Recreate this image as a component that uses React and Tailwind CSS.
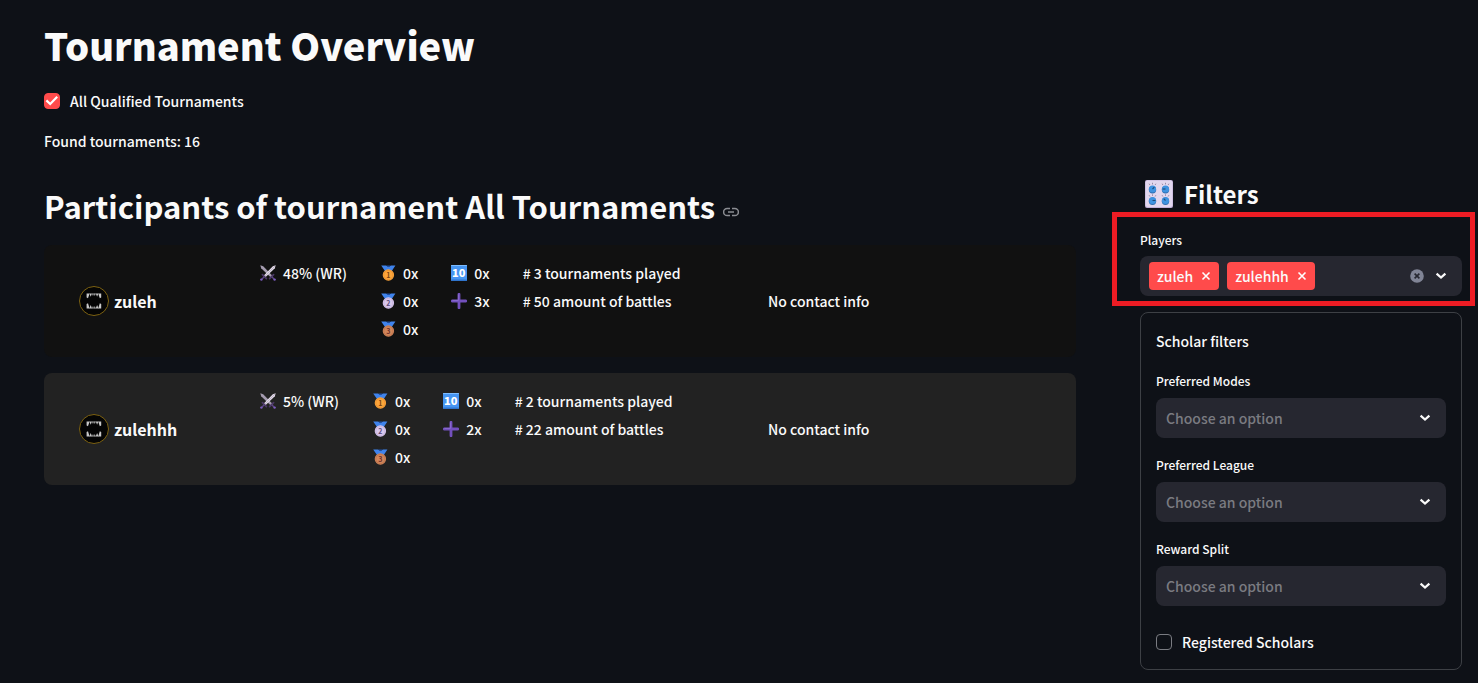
import { useState } from 'react'

const medalColors = [
  { fill: '#fca53b', ring: '#e08a2a', text: '#7a4312' },
  { fill: '#d9c8ec', ring: '#bba6d6', text: '#5d4a7a' },
  { fill: '#d1855a', ring: '#b56d45', text: '#6d2f2a' },
]

const participants = [
  { name: 'zuleh', winRate: 48, medals: [0, 0, 0], topTen: 0, other: 3, played: 3, battles: 50, card: 'bg-[#111111]' },
  { name: 'zulehhh', winRate: 5, medals: [0, 0, 0], topTen: 0, other: 2, played: 2, battles: 22, card: 'bg-[#222222]' },
]

const selects = [
  { id: 'modes', label: 'Preferred Modes' },
  { id: 'league', label: 'Preferred League' },
  { id: 'split', label: 'Reward Split' },
]

function Medal({ place }) {
  const c = medalColors[place - 1]
  return (
    <svg width="16" height="16" viewBox="0 0 16 16" className="shrink-0" aria-hidden="true">
      <path d="M1.2 0.4H6L8.5 2 11 0.4h4.4L11.8 6H5z" fill="#3f83ec" />
      <path d="M6.2 0.4h4.4L8.4 2.2z" fill="#1d4fa8" />
      <circle cx="8.4" cy="10" r="5.7" fill={c.fill} />
      <circle cx="8.4" cy="10" r="4.6" fill="none" stroke={c.ring} strokeWidth="0.6" />
      <text x="8.4" y="12.6" textAnchor="middle" fontSize="7" fontWeight="700" fill={c.text}>{place}</text>
    </svg>
  )
}

function Swords() {
  return (
    <svg width="16" height="16" viewBox="0 0 16 16" className="shrink-0" aria-hidden="true">
      <path d="M0.3 0.3l2.9.9 9.2 9.6-1.6 1.6L1.2 3.2z" fill="#a59cb0" />
      <path d="M15.7 0.3l-2.9.9-9.2 9.6 1.6 1.6L14.8 3.2z" fill="#e4dcea" />
      <path d="M15 1L4.6 11.6" stroke="#978da3" strokeWidth="0.5" />
      <path d="M2.4 9.6l4 4M13.6 9.6l-4 4" stroke="#4a3764" strokeWidth="1.7" strokeLinecap="round" />
      <path d="M4.2 11.8l-2.4 2.4M11.8 11.8l2.4 2.4" stroke="#5d4585" strokeWidth="1.4" />
      <circle cx="1.4" cy="14.6" r="1.2" fill="#7c5cc0" />
      <circle cx="14.6" cy="14.6" r="1.2" fill="#7c5cc0" />
    </svg>
  )
}

function Ten() {
  return (
    <svg width="16" height="16" viewBox="0 0 16 16" className="shrink-0" aria-hidden="true">
      <rect width="16" height="16" rx="1" fill="#4695f2" />
      <rect width="16" height="1" rx="0.5" fill="#7dbcff" />
      <rect y="14.6" width="16" height="1.4" rx="0.7" fill="#2f74cc" />
      <text x="7.8" y="12" textAnchor="middle" fontSize="11" fontWeight="900" fill="#fff">10</text>
    </svg>
  )
}

function Plus() {
  return (
    <svg width="16" height="16" viewBox="0 0 16 16" className="shrink-0" aria-hidden="true">
      <path d="M8 1.2v13.6M1.2 8h13.6" stroke="#7350bd" strokeWidth="2.8" strokeLinecap="round" />
      <path d="M7.4 1.4V7.4H1.4" fill="none" stroke="#9377d6" strokeWidth="0.7" />
    </svg>
  )
}

function Avatar() {
  return (
    <svg width="30" height="30" viewBox="0 0 30 30" className="shrink-0" aria-hidden="true">
      <circle cx="15" cy="15" r="14.5" fill="#050505" stroke="#7d6212" />
      <g fill="#c8c8c8">
        <path d="M7.600 7.400h3L9 12.200l-1.400-.8zM22.200 7.400h-3l1.600 4.800 1.400-.8z" />
        <path d="M10.400 7.400h2.600l-1.300 3.400zM16.800 7.400h2.600l-1.300 3.400zM13 7.400h1.900L14 10zM14.900 7.400h1.900L15.800 10z" />
        <path d="M7.600 22.500h3L9 17.200l-1.400.8zM22.200 22.500h-3l1.600-5.300 1.400.8z" />
        <path d="M10.200 22.500h2.900l-1.400-3.400zM16.700 22.500h2.900l-1.500-3.400zM13 22.500h1.900L14 20zM14.900 22.500h1.900L15.800 20z" />
      </g>
    </svg>
  )
}

function Knobs() {
  const knobs = [
    [7.5, 9, 1.8, -1.8],
    [20.5, 9, -3, 0],
    [7.5, 20.5, 3, 0],
    [20.5, 20.5, -1.8, -1.8],
  ]
  return (
    <svg width="28" height="28" viewBox="0 0 28 28" className="shrink-0" aria-hidden="true">
      <rect width="28" height="28" rx="2" fill="#c2b0d8" />
      <rect x="0.6" y="0.4" width="26.8" height="26.6" rx="2" fill="#e2d7ee" />
      {knobs.map(([x, y, dx, dy], i) => (
        <g key={i}>
          <path
            d={`M${x} ${y - 4.6}v-1.6M${x - 2.6} ${y - 4}l-.8-1.3M${x + 2.6} ${y - 4}l.8-1.3`}
            stroke="#857a94"
            strokeWidth="0.8"
          />
          <circle cx={x} cy={y + 0.7} r="3.7" fill="#2f6cae" />
          <circle cx={x} cy={y} r="3.6" fill="#3f93e0" />
          <path d={`M${x} ${y}l${dx} ${dy}`} stroke="#1d4a78" strokeWidth="1.1" />
        </g>
      ))}
    </svg>
  )
}

function Chevron({ className = '' }) {
  return (
    <svg width="12" height="8" viewBox="0 0 12 8" className={className} aria-hidden="true">
      <path d="M1.6 1.6L6 5.6l4.4-4" fill="none" stroke="#fafafa" strokeWidth="2.2" />
    </svg>
  )
}

function Stat({ icon, children }) {
  return (
    <div className="flex items-center gap-[7px] whitespace-nowrap">
      {icon}
      <span>{children}</span>
    </div>
  )
}

function ParticipantCard({ p }) {
  return (
    <li className={`grid grid-cols-[181fr_508fr_273fr] rounded-lg px-[35px] py-3.5 leading-7 ${p.card}`}>
      <div className="flex items-center gap-[5px]">
        <Avatar />
        <span className="text-base font-bold">{p.name}</span>
      </div>
      <div className="flex gap-[33px]">
        <div>
          <Stat icon={<Swords />}>{p.winRate}% (WR)</Stat>
        </div>
        <div>
          {p.medals.map((n, i) => (
            <Stat key={i} icon={<Medal place={i + 1} />}>{n}x</Stat>
          ))}
        </div>
        <div>
          <Stat icon={<Ten />}>{p.topTen}x</Stat>
          <Stat icon={<Plus />}>{p.other}x</Stat>
        </div>
        <div className="whitespace-nowrap">
          <p># {p.played} tournaments played</p>
          <p># {p.battles} amount of battles</p>
        </div>
      </div>
      <p className="self-center whitespace-nowrap">No contact info</p>
    </li>
  )
}

function Checkbox({ label, checked, onChange }) {
  return (
    <label className="flex items-center gap-2.5 leading-6">
      <span className="relative flex">
        <input
          type="checkbox"
          checked={checked}
          onChange={e => onChange(e.target.checked)}
          className="size-4 appearance-none rounded border border-[#7a7c82] checked:border-[#ff4b4b] checked:bg-[#ff4b4b]"
        />
        {checked && (
          <svg viewBox="0 0 16 16" className="pointer-events-none absolute inset-0" aria-hidden="true">
            <path d="M2.4 7.4l3.8 3.6 7-7.2" fill="none" stroke="#fff" strokeWidth="2.2" />
          </svg>
        )}
      </span>
      {label}
    </label>
  )
}

function PlayerSelect() {
  const [players, setPlayers] = useState(['zuleh', 'zulehhh'])
  return (
    <div className="relative">
      <label htmlFor="players" className="block text-xs leading-6">Players</label>
      <div className="mt-1 flex h-10 items-center gap-2 rounded-lg bg-[#262730] pl-[9px] pr-[15px]">
        {players.map(name => (
          <span key={name} className="flex h-7 items-center gap-2 rounded bg-[#ff4b4b] px-2">
            {name}
            <button type="button" aria-label={`Remove ${name}`} onClick={() => setPlayers(players.filter(n => n !== name))}>
              <svg width="10" height="10" viewBox="0 0 10 10" aria-hidden="true">
                <path d="M1.5 1.5l7 7M8.5 1.5l-7 7" stroke="#fff" strokeWidth="1.6" />
              </svg>
            </button>
          </span>
        ))}
        <input id="players" type="text" className="min-w-0 flex-1 bg-transparent outline-none" />
        <button type="button" aria-label="Clear all" onClick={() => setPlayers([])}>
          <svg width="14" height="14" viewBox="0 0 14 14" aria-hidden="true">
            <circle cx="7" cy="7" r="6.8" fill="#808495" />
            <path d="M4.6 4.6l4.8 4.8M9.4 4.6L4.6 9.4" stroke="#262730" strokeWidth="1.6" />
          </svg>
        </button>
        <button type="button" aria-label="Open player list" className="ml-[3px]">
          <Chevron />
        </button>
      </div>
      {/* highlight frame */}
      <div className="pointer-events-none absolute -top-4 -right-[13px] -bottom-2.5 -left-7 border-5 border-[#ed1c24]" />
    </div>
  )
}

function FilterSelect({ id, label }) {
  return (
    <div className="mb-[15px]">
      <label htmlFor={id} className="block text-xs leading-6">{label}</label>
      <div className="relative mt-[5px]">
        <select id={id} className="h-10 w-full appearance-none rounded-lg bg-[#262730] px-2.5 pb-px text-[#7a7b81]">
          <option>Choose an option</option>
        </select>
        <Chevron className="pointer-events-none absolute top-4 right-[15px]" />
      </div>
    </div>
  )
}

export default function App() {
  const [allQualified, setAllQualified] = useState(true)
  const [registered, setRegistered] = useState(false)

  return (
    <div className="min-h-screen bg-[#0e1117] pt-[19px] pr-4 pb-3 pl-11 font-['Noto_Sans_CJK_SC',sans-serif] text-sm font-medium text-[#fafafa]">
      <h1 className="text-[38px] leading-[52px] font-black">Tournament Overview</h1>
      <div className="mt-[18px]">
        <Checkbox label="All Qualified Tournaments" checked={allQualified} onChange={setAllQualified} />
      </div>
      <p className="mt-4 leading-6">Found tournaments: 16</p>

      <div className="mt-[21px] flex gap-16">
        <main className="min-w-0 flex-1">
          <h2 className="flex items-center gap-2 py-2.5 text-[31px] leading-[44px] font-bold">
            Participants of tournament All Tournaments
            <a href="#participants" aria-label="Link to this section">
              <svg width="16" height="16" viewBox="0 0 16 16" className="mt-3" aria-hidden="true">
                <path d="M7 4.4H4.2a3.6 3.6 0 000 7.2H7M9 4.4h2.8a3.6 3.6 0 010 7.2H9M5 8h6" fill="none" stroke="#8b8d92" strokeWidth="1.5" />
              </svg>
            </a>
          </h2>
          <ul className="mt-[7px] flex flex-col gap-4">
            {participants.map(p => <ParticipantCard key={p.name} p={p} />)}
          </ul>
        </main>

        <aside className="w-[322px] shrink-0">
          <h3 className="flex items-center gap-[11px] pl-[5px] text-2xl leading-10 font-bold">
            <Knobs />
            Filters
          </h3>
          <div className="mt-3.5">
            <PlayerSelect />
          </div>
          <section className="mt-4 rounded-lg border border-[#3d4045] px-[15px] pt-4 pb-[15px]">
            <p className="mb-4 leading-6">Scholar filters</p>
            {selects.map(s => <FilterSelect key={s.id} {...s} />)}
            <div className="pt-[9px]">
              <Checkbox label="Registered Scholars" checked={registered} onChange={setRegistered} />
            </div>
          </section>
        </aside>
      </div>
    </div>
  )
}
